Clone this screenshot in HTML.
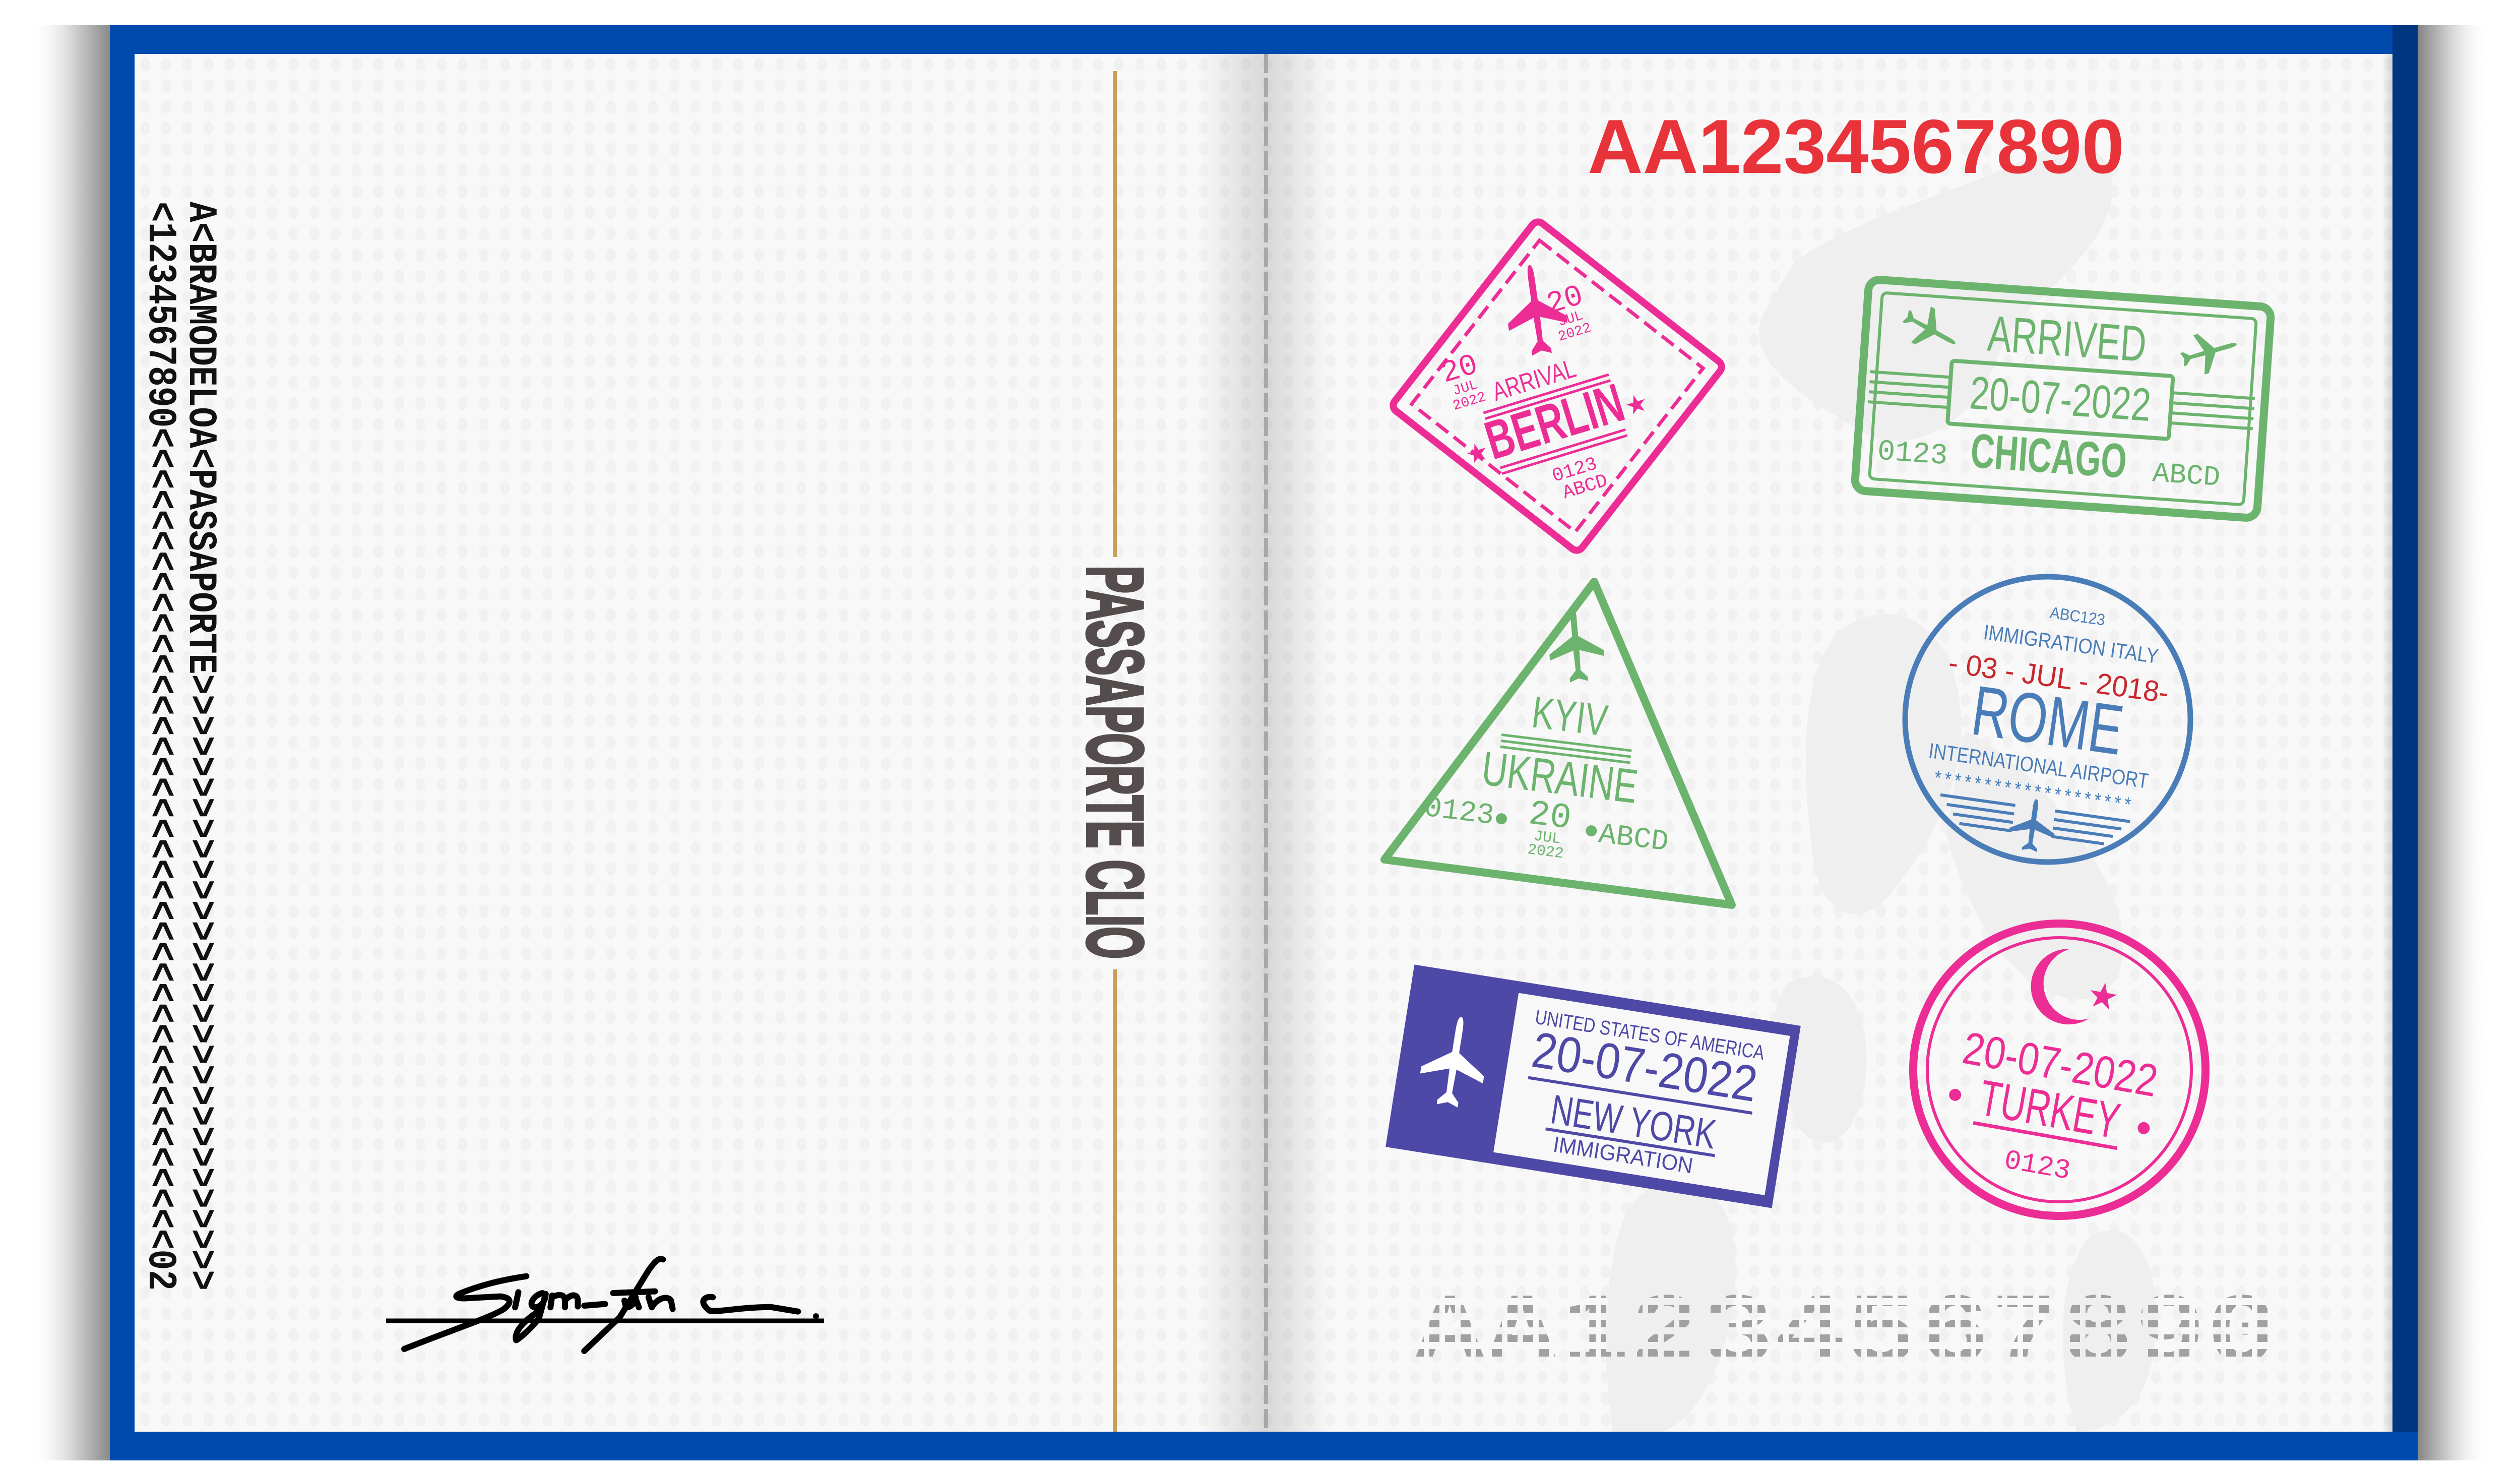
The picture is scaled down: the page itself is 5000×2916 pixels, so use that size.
<!DOCTYPE html>
<html><head><meta charset="utf-8"><style>
html,body{margin:0;padding:0;background:#fff;width:5000px;height:2916px;overflow:hidden}
svg{display:block}
text{font-family:"Liberation Sans",sans-serif}
.n{font-family:"Liberation Sans Narrow","Liberation Sans",sans-serif}
.m{font-family:"Liberation Mono",monospace}
</style></head><body>
<svg width="5000" height="2916" viewBox="0 0 5000 2916" xmlns="http://www.w3.org/2000/svg">
<defs>
<pattern id="dots" x="267" y="107" width="42" height="42" patternUnits="userSpaceOnUse">
<rect width="42" height="42" fill="#f8f8f8"/><ellipse cx="21" cy="21" rx="10" ry="13" fill="#f1f1f1"/></pattern>
<pattern id="dm" x="2805" y="2560" width="31" height="29" patternUnits="userSpaceOnUse">
<rect x="0" y="0" width="20" height="15" fill="#a3a0a0"/></pattern>
<linearGradient id="shL" x1="0" x2="1"><stop offset="0" stop-color="#fff" stop-opacity="0"/><stop offset="0.6" stop-color="#c8c8c8"/><stop offset="1" stop-color="#8a8a8a"/></linearGradient>
<linearGradient id="shR" x1="0" x2="1"><stop offset="0" stop-color="#858585"/><stop offset="0.4" stop-color="#c8c8c8"/><stop offset="1" stop-color="#fff" stop-opacity="0"/></linearGradient>
<linearGradient id="gL" x1="0" x2="1"><stop offset="0" stop-color="#000" stop-opacity="0"/><stop offset="1" stop-color="#000" stop-opacity="0.13"/></linearGradient>
<linearGradient id="gR" x1="0" x2="1"><stop offset="0" stop-color="#000" stop-opacity="0.13"/><stop offset="1" stop-color="#000" stop-opacity="0"/></linearGradient>
<path id="plane" d="M0,-100 C8,-100 10,-85 10,-70 L10,-25 L90,15 L90,30 L10,10 L8,60 L30,78 L30,88 L0,80 L-30,88 L-30,78 L-8,60 L-10,10 L-90,30 L-90,15 L-10,-25 L-10,-70 C-10,-85 -8,-100 0,-100 Z"/>
</defs>

<rect x="60" y="50" width="158" height="2847" fill="url(#shL)"/>
<rect x="4797" y="50" width="140" height="2847" fill="url(#shR)"/>
<rect x="218" y="50" width="4579" height="2847" fill="#004aad"/>
<rect x="4747" y="50" width="50" height="2790" fill="#00367f"/>
<rect x="267" y="107" width="4480" height="2733" fill="url(#dots)"/>
<g fill="#efefef">
<path d="M3560,520 C3700,420 3900,380 4050,300 C4150,250 4220,330 4180,430 C4120,560 4000,600 3960,720 C3900,860 3780,900 3700,860 C3600,800 3450,720 3500,620 Z"/>
<path d="M3650,1250 C3750,1180 3850,1230 3880,1350 C3920,1500 3850,1650 3760,1760 C3700,1850 3620,1820 3600,1720 C3580,1580 3560,1350 3650,1250 Z"/>
<path d="M3900,1450 C4000,1500 4100,1600 4180,1750 C4250,1900 4200,2000 4100,1980 C3980,1950 3900,1800 3860,1650 Z"/>
<path d="M3230,2400 C3300,2300 3420,2330 3440,2460 C3460,2600 3400,2800 3300,2840 L3200,2840 C3180,2700 3180,2500 3230,2400 Z"/>
<path d="M4150,2450 C4250,2400 4300,2550 4270,2700 C4250,2800 4180,2840 4120,2840 C4080,2700 4080,2520 4150,2450 Z"/>
<path d="M3550,1950 C3650,1900 3720,2000 3700,2150 C3680,2280 3600,2300 3560,2220 C3520,2120 3500,2000 3550,1950 Z"/>
</g>
<rect x="2380" y="107" width="131" height="2733" fill="url(#gL)"/>
<rect x="2511" y="107" width="130" height="2733" fill="url(#gR)"/>
<line x1="2512" y1="107" x2="2512" y2="2840" stroke="#a8a8a8" stroke-width="8" stroke-dasharray="38 10"/>
<rect x="4725" y="107" width="22" height="2733" fill="url(#gL)"/>

<rect x="2208" y="141" width="8" height="964" fill="#c9a05a"/>
<rect x="2208" y="1923" width="8" height="917" fill="#c9a05a"/>
<text transform="translate(2158,1512) rotate(90)" text-anchor="middle" font-size="158" font-weight="bold" class="n" fill="#554d4d" stroke="#554d4d" stroke-width="6" textLength="780" lengthAdjust="spacingAndGlyphs">PASSAPORTE CLIO</text>

<text transform="translate(377,400) rotate(90)" font-size="80" font-weight="bold" class="m" fill="#111" textLength="2160" lengthAdjust="spacingAndGlyphs">A&lt;BRAMODELOA&lt;PASSAPORTE&gt;&gt;&gt;&gt;&gt;&gt;&gt;&gt;&gt;&gt;&gt;&gt;&gt;&gt;&gt;&gt;&gt;&gt;&gt;&gt;&gt;&gt;&gt;&gt;&gt;&gt;&gt;&gt;&gt;&gt;</text>
<text transform="translate(297,400) rotate(90)" font-size="80" font-weight="bold" class="m" fill="#111" textLength="2160" lengthAdjust="spacingAndGlyphs">&lt;1234567890&lt;&lt;&lt;&lt;&lt;&lt;&lt;&lt;&lt;&lt;&lt;&lt;&lt;&lt;&lt;&lt;&lt;&lt;&lt;&lt;&lt;&lt;&lt;&lt;&lt;&lt;&lt;&lt;&lt;&lt;&lt;&lt;&lt;&lt;&lt;&lt;&lt;&lt;&lt;&lt;02</text>

<line x1="766" y1="2620" x2="1635" y2="2620" stroke="#000" stroke-width="9"/>
<g transform="translate(700,2400) scale(0.6378,0.3333)" fill="none" stroke="#000" stroke-linecap="round" stroke-linejoin="round">
<path vector-effect="non-scaling-stroke" stroke-width="12" d="M540,395 C450,420 380,460 330,500 C310,520 330,530 360,525 L460,515 C500,525 490,560 470,590 C430,640 300,720 160,828 M515,490 L505,580 M590,495 C560,510 545,570 565,580 C590,580 600,530 600,500 L580,640 C560,700 510,780 508,775 C500,720 540,650 580,600 M620,510 L615,580 M620,520 C640,500 660,500 660,540 L660,580 M665,530 C680,500 700,500 700,540 L700,575 M720,570 L785,560 M965,295 C950,280 935,320 920,360 L830,640 L720,840 M810,495 L940,485 M845,540 L850,580 C870,580 880,540 880,520 M880,530 L890,580 M920,520 L930,580 C950,520 980,510 990,540 L995,590 M1120,520 C1100,510 1070,540 1110,600 C1140,610 1200,580 1300,578 L1385,605"/>
</g>
<circle cx="1619" cy="2611" r="6" fill="#000"/>

<text x="3150" y="343" font-size="152" font-weight="bold" fill="#e8333b" textLength="1065" lengthAdjust="spacingAndGlyphs">AA1234567890</text>
<text x="2805" y="2702" font-size="200" font-weight="bold" class="m" fill="url(#dm)" textLength="1715" lengthAdjust="spacingAndGlyphs">AA1234567890</text>

<!-- BERLIN -->
<g fill="#ec2d95" stroke="none">
<g transform="translate(3090,766) rotate(38)" fill="none" stroke="#ec2d95">
<rect x="-236" y="-236" width="472" height="472" rx="14" stroke-width="14"/>
<rect x="-206" y="-206" width="412" height="412" stroke-width="7" stroke-dasharray="30 14"/>
</g>
<g transform="translate(3085,838) rotate(-17)">
<text x="0" y="35" text-anchor="middle" font-size="108" class="n" font-weight="bold" textLength="280" lengthAdjust="spacingAndGlyphs">BERLIN</text>
<text x="-165" y="30" text-anchor="middle" font-size="50">★</text>
<text x="165" y="30" text-anchor="middle" font-size="50">★</text>
<rect x="-130" y="-62" width="260" height="5"/><rect x="-130" y="-50" width="260" height="5"/>
<rect x="-130" y="52" width="260" height="5"/><rect x="-130" y="64" width="260" height="5"/>
<text x="-15" y="-75" text-anchor="middle" font-size="52" class="n" textLength="170" lengthAdjust="spacingAndGlyphs">ARRIVAL</text>
<text x="10" y="112" text-anchor="middle" font-size="38" class="m">0123</text>
<text x="20" y="150" text-anchor="middle" font-size="38" class="m">ABCD</text>
<text x="-150" y="-140" text-anchor="middle" font-size="60" class="m">20</text>
<text x="-150" y="-110" text-anchor="middle" font-size="28" class="m">JUL</text>
<text x="-150" y="-82" text-anchor="middle" font-size="28" class="m">2022</text>
<text x="90" y="-210" text-anchor="middle" font-size="60" class="m">20</text>
<text x="90" y="-180" text-anchor="middle" font-size="28" class="m">JUL</text>
<text x="90" y="-152" text-anchor="middle" font-size="28" class="m">2022</text>
</g>
<use href="#plane" transform="translate(3048,620) rotate(-8) scale(0.65,0.95)"/>
</g>

<!-- CHICAGO -->
<g transform="translate(4093,791) rotate(4)" fill="#6cb36e">
<rect x="-400" y="-210" width="800" height="420" rx="22" fill="none" stroke="#6cb36e" stroke-width="16"/>
<rect x="-372" y="-185" width="744" height="370" rx="10" fill="none" stroke="#6cb36e" stroke-width="6"/>
<text x="0" y="-85" text-anchor="middle" font-size="100" class="n" textLength="315" lengthAdjust="spacingAndGlyphs">ARRIVED</text>
<use href="#plane" transform="translate(-275,-120) rotate(115) scale(0.45,0.6)"/>
<use href="#plane" transform="translate(280,-112) rotate(70) scale(0.45,0.6)"/>
<rect x="-225" y="-60" width="440" height="125" rx="6" fill="none" stroke="#6cb36e" stroke-width="8"/>
<text x="-5" y="32" text-anchor="middle" font-size="92" class="n" textLength="360" lengthAdjust="spacingAndGlyphs">20-07-2022</text>
<rect x="-385" y="-30" width="160" height="6"/><rect x="-385" y="-10" width="160" height="6"/><rect x="-385" y="10" width="160" height="6"/><rect x="-385" y="30" width="160" height="6"/>
<rect x="215" y="-30" width="165" height="6"/><rect x="215" y="-10" width="165" height="6"/><rect x="215" y="10" width="165" height="6"/><rect x="215" y="30" width="165" height="6"/>
<text x="-290" y="145" text-anchor="middle" font-size="58" class="m">0123</text>
<text x="-20" y="148" text-anchor="middle" font-size="96" class="n" font-weight="bold" textLength="310" lengthAdjust="spacingAndGlyphs">CHICAGO</text>
<text x="255" y="150" text-anchor="middle" font-size="56" class="m">ABCD</text>
</g>

<!-- KYIV -->
<g fill="#6cb36e">
<path d="M3163,1154 L2747,1705 L3436,1795 Z" fill="none" stroke="#6cb36e" stroke-width="16" stroke-linejoin="round"/>
<use href="#plane" transform="translate(3127,1282) rotate(-5) scale(0.6,0.8)"/>
<g transform="rotate(7 3100 1500)">
<text x="3105" y="1450" text-anchor="middle" font-size="88" class="n" textLength="150" lengthAdjust="spacingAndGlyphs">KYIV</text>
<rect x="2975" y="1470" width="260" height="5"/><rect x="2975" y="1482" width="260" height="5"/><rect x="2975" y="1494" width="260" height="5"/>
<text x="3100" y="1575" text-anchor="middle" font-size="95" class="n" textLength="310" lengthAdjust="spacingAndGlyphs">UKRAINE</text>
<text x="2910" y="1650" text-anchor="middle" font-size="58" class="m">0123</text>
<circle cx="2995" cy="1638" r="11"/>
<text x="3090" y="1640" text-anchor="middle" font-size="70" class="m">20</text>
<text x="3090" y="1672" text-anchor="middle" font-size="30" class="m">JUL</text>
<text x="3090" y="1700" text-anchor="middle" font-size="30" class="m">2022</text>
<circle cx="3175" cy="1640" r="11"/>
<text x="3260" y="1660" text-anchor="middle" font-size="58" class="m">ABCD</text>
</g>
</g>

<!-- ROME -->
<g transform="translate(4063,1427)">
<circle r="283" fill="none" stroke="#4a7db8" stroke-width="11"/>
<g transform="rotate(8)" fill="#4a7db8">
<text x="30" y="-200" text-anchor="middle" font-size="32" textLength="110" lengthAdjust="spacingAndGlyphs">ABC123</text>
<text x="25" y="-140" text-anchor="middle" font-size="42" class="n" textLength="350" lengthAdjust="spacingAndGlyphs">IMMIGRATION ITALY</text>
<text x="10" y="-65" text-anchor="middle" font-size="58" class="n" fill="#c7282e" textLength="440" lengthAdjust="spacingAndGlyphs">- 03 - JUL - 2018-</text>
<text x="0" y="50" text-anchor="middle" font-size="140" class="n" textLength="300" lengthAdjust="spacingAndGlyphs">ROME</text>
<text x="-5" y="108" text-anchor="middle" font-size="42" class="n" textLength="440" lengthAdjust="spacingAndGlyphs">INTERNATIONAL AIRPORT</text>
<text x="-10" y="160" text-anchor="middle" font-size="40" class="m" textLength="400" lengthAdjust="spacingAndGlyphs">********************</text>
<rect x="-190" y="175" width="150" height="6"/><rect x="-175" y="192" width="135" height="6"/><rect x="-160" y="209" width="120" height="6"/><rect x="-145" y="226" width="105" height="6"/>
<rect x="40" y="175" width="150" height="6"/><rect x="40" y="192" width="135" height="6"/><rect x="40" y="209" width="120" height="6"/><rect x="40" y="226" width="105" height="6"/>
<use href="#plane" transform="translate(0,215) scale(0.5,0.55)"/>
</g>
</g>

<!-- NEW YORK -->
<g transform="translate(3161,2155) rotate(9)">
<rect x="-388" y="-183" width="776" height="366" fill="#4e48a6"/>
<rect x="-175" y="-160" width="545" height="320" fill="#f8f8f8"/>
<use href="#plane" transform="translate(-280,0) scale(0.7,0.95)" fill="#fff"/>
<g fill="#4e48a6">
<text x="95" y="-105" text-anchor="middle" font-size="40" class="n" textLength="460" lengthAdjust="spacingAndGlyphs">UNITED STATES OF AMERICA</text>
<text x="95" y="-20" text-anchor="middle" font-size="100" class="n" textLength="450" lengthAdjust="spacingAndGlyphs">20-07-2022</text>
<rect x="-130" y="0" width="450" height="6"/>
<text x="90" y="85" text-anchor="middle" font-size="82" class="n" textLength="330" lengthAdjust="spacingAndGlyphs">NEW YORK</text>
<rect x="-80" y="95" width="340" height="6"/>
<text x="80" y="140" text-anchor="middle" font-size="44" class="n" textLength="280" lengthAdjust="spacingAndGlyphs">IMMIGRATION</text>
</g>
</g>

<!-- TURKEY -->
<g transform="translate(4086,2122)">
<circle r="290" fill="none" stroke="#ec2d95" stroke-width="16"/>
<circle r="262" fill="none" stroke="#ec2d95" stroke-width="6"/>
<g transform="rotate(10)" fill="#ec2d95">
<path d="M-20,-240 A75,75 0 1 0 40,-110 A58,58 0 1 1 -20,-240 Z"/>
<text x="60" y="-135" text-anchor="middle" font-size="70">★</text>
<text x="0" y="20" text-anchor="middle" font-size="90" class="n" textLength="390" lengthAdjust="spacingAndGlyphs">20-07-2022</text>
<circle cx="-195" cy="85" r="12"/><circle cx="185" cy="85" r="12"/>
<text x="-5" y="115" text-anchor="middle" font-size="100" class="n" textLength="280" lengthAdjust="spacingAndGlyphs">TURKEY</text>
<rect x="-150" y="130" width="290" height="7"/>
<text x="-10" y="210" text-anchor="middle" font-size="55" class="m">0123</text>
</g>
</g>
</svg>
</body></html>
